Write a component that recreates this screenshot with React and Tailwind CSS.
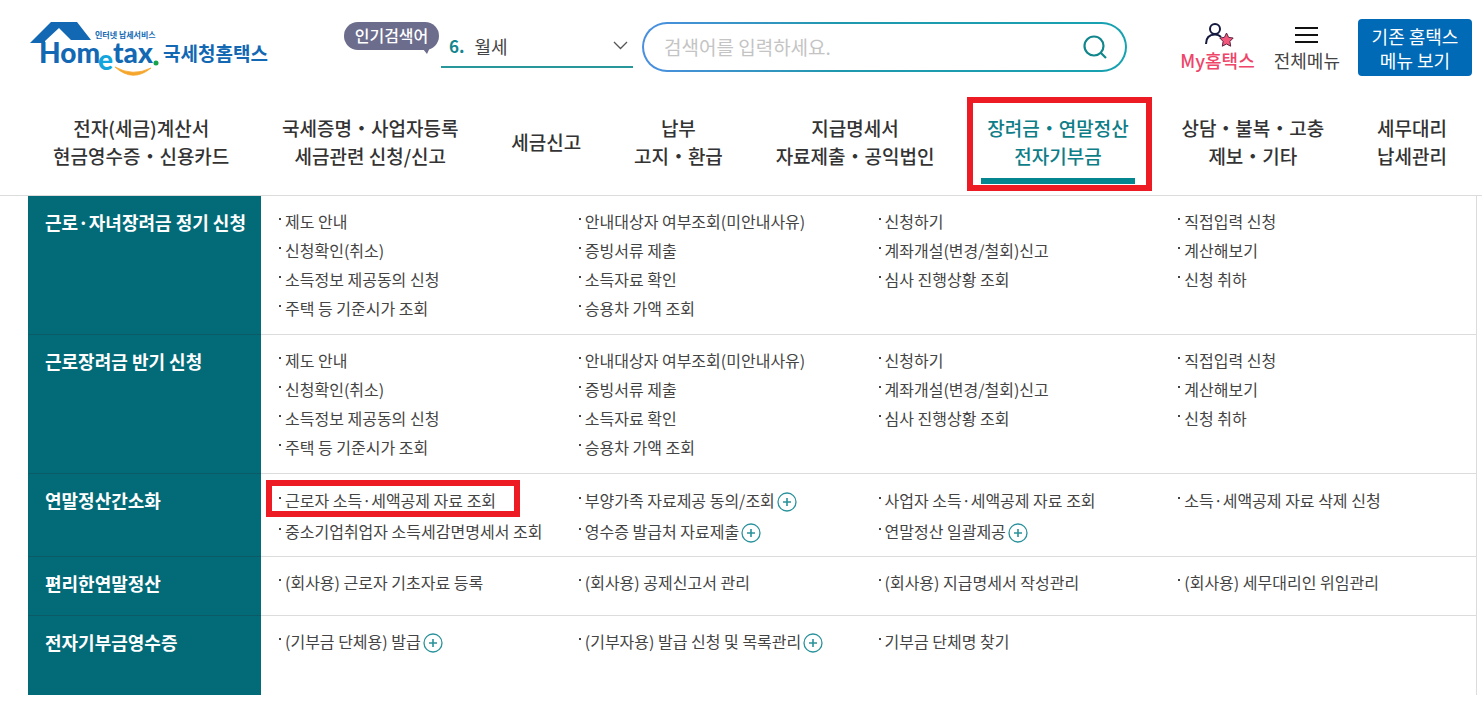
import React from 'react'

const navItems = [
  { lines: ['전자(세금)계산서', '현금영수증・신용카드'] },
  { lines: ['국세증명・사업자등록', '세금관련 신청/신고'] },
  { lines: ['세금신고'] },
  { lines: ['납부', '고지・환급'] },
  { lines: ['지급명세서', '자료제출・공익법인'] },
  { lines: ['장려금・연말정산', '전자기부금'], active: true },
  { lines: ['상담・불복・고충', '제보・기타'] },
  { lines: ['세무대리', '납세관리'] },
]

const incentiveLinks = [
  [{ text: '제도 안내' }, { text: '안내대상자 여부조회(미안내사유)' }, { text: '신청하기' }, { text: '직접입력 신청' }],
  [{ text: '신청확인(취소)' }, { text: '증빙서류 제출' }, { text: '계좌개설(변경/철회)신고' }, { text: '계산해보기' }],
  [{ text: '소득정보 제공동의 신청' }, { text: '소득자료 확인' }, { text: '심사 진행상황 조회' }, { text: '신청 취하' }],
  [{ text: '주택 등 기준시가 조회' }, { text: '승용차 가액 조회' }],
]

const sections = [
  { title: '근로·자녀장려금 정기 신청', pad: 'pb-3', rows: incentiveLinks },
  { title: '근로장려금 반기 신청', pad: 'pb-3', rows: incentiveLinks },
  {
    title: '연말정산간소화',
    pad: 'pb-[10px]',
    tall: true,
    rows: [
      [{ text: '근로자 소득·세액공제 자료 조회', marked: true }, { text: '부양가족 자료제공 동의/조회', more: true }, { text: '사업자 소득·세액공제 자료 조회' }, { text: '소득·세액공제 자료 삭제 신청' }],
      [{ text: '중소기업취업자 소득세감면명세서 조회' }, { text: '영수증 발급처 자료제출', more: true }, { text: '연말정산 일괄제공', more: true }],
    ],
  },
  {
    title: '편리한연말정산',
    pad: 'pb-[19px]',
    rows: [[{ text: '(회사용) 근로자 기초자료 등록' }, { text: '(회사용) 공제신고서 관리' }, { text: '(회사용) 지급명세서 작성관리' }, { text: '(회사용) 세무대리인 위임관리' }]],
  },
  {
    title: '전자기부금영수증',
    pad: 'pb-10',
    rows: [[{ text: '(기부금 단체용) 발급', more: true }, { text: '(기부자용) 발급 신청 및 목록관리', more: true }, { text: '기부금 단체명 찾기' }]],
  },
]

function Logo() {
  return (
    <svg width="240" height="60" viewBox="0 0 240 60" role="img" aria-label="국세청홈택스">
      <path d="M0 23 L21 2 H47 L61 20 H41 L29 8 L15 21 V23 Z" fill="#1268b3" />
      <text x="9" y="43" fontFamily="Lato" fontWeight="900" fontSize="28" fill="#1268b3">Hom</text>
      <text x="68" y="50" fontFamily="Lato" fontWeight="900" fontSize="28" fill="#12a5dd">e</text>
      <text x="83" y="43" fontFamily="Lato" fontWeight="900" fontSize="28" fill="#1268b3">tax</text>
      <circle cx="126" cy="43" r="2.5" fill="#16a34a" />
      <path d="M85 47 Q103 63 121 48 Q103 57 85 47 Z" fill="#f5a52a" stroke="#f5a52a" strokeWidth="0.8" />
      <text x="65" y="18" fontFamily="Noto Sans CJK KR" fontWeight="700" fontSize="8" fill="#1268b3">인터넷 납세서비스</text>
      <text x="133" y="41" fontFamily="Noto Sans CJK KR" fontWeight="700" fontSize="19" fill="#1268b3">국세청홈택스</text>
    </svg>
  )
}

function UserStar() {
  return (
    <svg width="32" height="26" viewBox="0 0 32 26" fill="none" aria-hidden="true">
      <circle cx="13" cy="7" r="5" stroke="#14193f" strokeWidth="2" />
      <path d="M4 22 C4 15.500 7.500 12.500 13 12.500 C15.500 12.500 17.500 13.300 19 15" stroke="#14193f" strokeWidth="2" />
      <path d="M24.500 11 L26.600 15.400 L31.200 16 L27.900 19.400 L28.700 24.200 L24.500 22 L20.300 24.200 L21.100 19.400 L17.800 16 L22.400 15.400 Z" fill="#f4577c" stroke="#5b2440" strokeWidth="1" strokeLinejoin="round" />
    </svg>
  )
}

function PlusCircle() {
  return (
    <svg className="mt-1 ml-[2px] shrink-0" width="20" height="20" viewBox="0 0 20 20" fill="none" stroke="#2a929b" aria-hidden="true">
      <circle cx="10" cy="10" r="9" strokeWidth="1.3" />
      <path d="M10 6 V14 M6 10 H14" strokeWidth="1.6" />
    </svg>
  )
}

function Header() {
  return (
    <header className="flex h-[95px] items-start pl-[30px] pr-[10px]">
      <a href="#home" className="mt-5 shrink-0"><Logo /></a>
      <div className="relative mt-[22px] ml-[74px] flex h-7 w-[95px] shrink-0 items-center justify-center rounded-full bg-[#6c6c8c] text-base font-medium text-white">
        <span className="mb-[2px]">인기검색어</span>
        <svg className="absolute right-1 -bottom-1" width="16" height="16" viewBox="0 0 16 16" fill="#6c6c8c" aria-hidden="true"><path d="M0 10 L14 3 L8 16 L4 11 Z" /></svg>
      </div>
      <div className="relative mt-[25px] ml-[2px] flex h-[43px] w-[192px] shrink-0 items-center border-b-2 border-[#28979c] pl-2">
        <label htmlFor="keyword" className="text-[17px] font-bold text-[#14858f]">6.</label>
        <select id="keyword" className="h-full flex-1 appearance-none bg-transparent pl-[10px] text-lg text-[#444] outline-none">
          <option>월세</option>
        </select>
        <svg className="pointer-events-none absolute right-[5px]" width="15" height="9" viewBox="0 0 15 9" fill="none" stroke="#555" strokeWidth="1.3" aria-hidden="true"><path d="M1 1 L7.500 7.500 L14 1" /></svg>
      </div>
      <form className="mt-[22px] ml-[9px] flex h-[50px] min-w-0 flex-1 rounded-full bg-linear-to-r from-[#4a8fe0] via-[#1f98ae] via-40% to-[#17a2b1] p-[2px]" onSubmit={(e) => e.preventDefault()}>
        <div className="flex min-w-0 flex-1 items-center rounded-full bg-white pr-[17px] pl-5">
          <input type="text" aria-label="검색어" placeholder="검색어를 입력하세요." className="min-w-0 flex-1 bg-transparent text-[19px] text-[#444] outline-none placeholder:text-[#c4c4c4]" />
          <button type="submit" aria-label="검색">
            <svg width="25" height="25" viewBox="0 0 25 25" fill="none" stroke="#11868c" strokeWidth="2.200" aria-hidden="true"><circle cx="11" cy="11" r="9.500" /><path d="M17.500 17.500 L23 23" /></svg>
          </button>
        </div>
      </form>
      <div className="mt-[22px] ml-[53px] flex shrink-0">
        <a href="#my" className="flex flex-col items-center text-lg leading-6 font-medium text-[#ee4569]"><UserStar />My홈택스</a>
        <button type="button" className="ml-[19px] flex flex-col items-center text-lg leading-6 text-[#444]">
          <svg width="24" height="26" viewBox="0 0 24 26" stroke="#111" strokeWidth="2" aria-hidden="true"><path d="M0 6 H23 M0 13 H23 M0 20 H23" /></svg>
          전체메뉴
        </button>
      </div>
      <button type="button" className="mt-[19px] ml-[18px] h-[57px] w-[114px] shrink-0 rounded bg-[#006ab6] text-lg leading-6 text-white">
        기존 홈택스<br />메뉴 보기
      </button>
    </header>
  )
}

function Nav() {
  return (
    <nav className="flex h-[101px] items-center justify-between border-b border-[#dcdcdc] pr-[35px] pb-[7px] pl-[53px]">
      {navItems.map((item) => (
        <a key={item.lines[0]} href="#menu" className={`relative text-center text-[19px] leading-7 font-medium ${item.active ? 'text-[#0d7d87]' : 'text-[#333]'}`}>
          {item.lines.map((line) => <span key={line} className="block whitespace-nowrap">{line}</span>)}
          {item.active && <span className="absolute -inset-x-[6px] -bottom-[14px] h-[6px] bg-[#048690]" />}
          {item.active && <span className="absolute -top-[17px] -right-[23px] -bottom-[21px] -left-5 border-6 border-[#ed1c24]" />}
        </a>
      ))}
    </nav>
  )
}

function MenuLink({ item, tall }) {
  return (
    <li className={`relative flex items-center whitespace-nowrap ${tall ? 'h-[31px]' : 'h-[29px]'}`}>
      <span className="mr-1 mb-1 ml-[2px] size-[2px] shrink-0 bg-[#444]" />
      <a href="#link">{item.text}</a>
      {item.more && <PlusCircle />}
      {item.marked && <span className="absolute -top-1 -left-[11px] h-[37px] w-[254px] border-6 border-[#ed1c24]" />}
    </li>
  )
}

function Section({ section, last }) {
  return (
    <section className="flex">
      <h2 className={`w-[233px] shrink-0 bg-[#036b78] pt-3 pl-[17px] text-lg leading-[29px] font-bold text-white ${last ? '' : 'border-b border-[#0b5b67]'}`}>{section.title}</h2>
      <div className={`flex-1 border-r border-r-[#dcdcdc] pt-[10px] pl-4 text-base text-[#444] ${section.pad} ${last ? '' : 'border-b border-b-[#dcdcdc]'}`}>
        {section.rows.map((row) => (
          <ul key={row[0].text} className="grid grid-cols-4">
            {row.map((item) => <MenuLink key={item.text} item={item} tall={section.tall} />)}
          </ul>
        ))}
      </div>
    </section>
  )
}

export default function App() {
  return (
    <div className="min-h-screen bg-white font-['Noto_Sans_CJK_KR',sans-serif]">
      <Header />
      <Nav />
      <main className="mr-[5px] ml-7">
        {sections.map((section, i) => <Section key={section.title} section={section} last={i === sections.length - 1} />)}
      </main>
    </div>
  )
}
